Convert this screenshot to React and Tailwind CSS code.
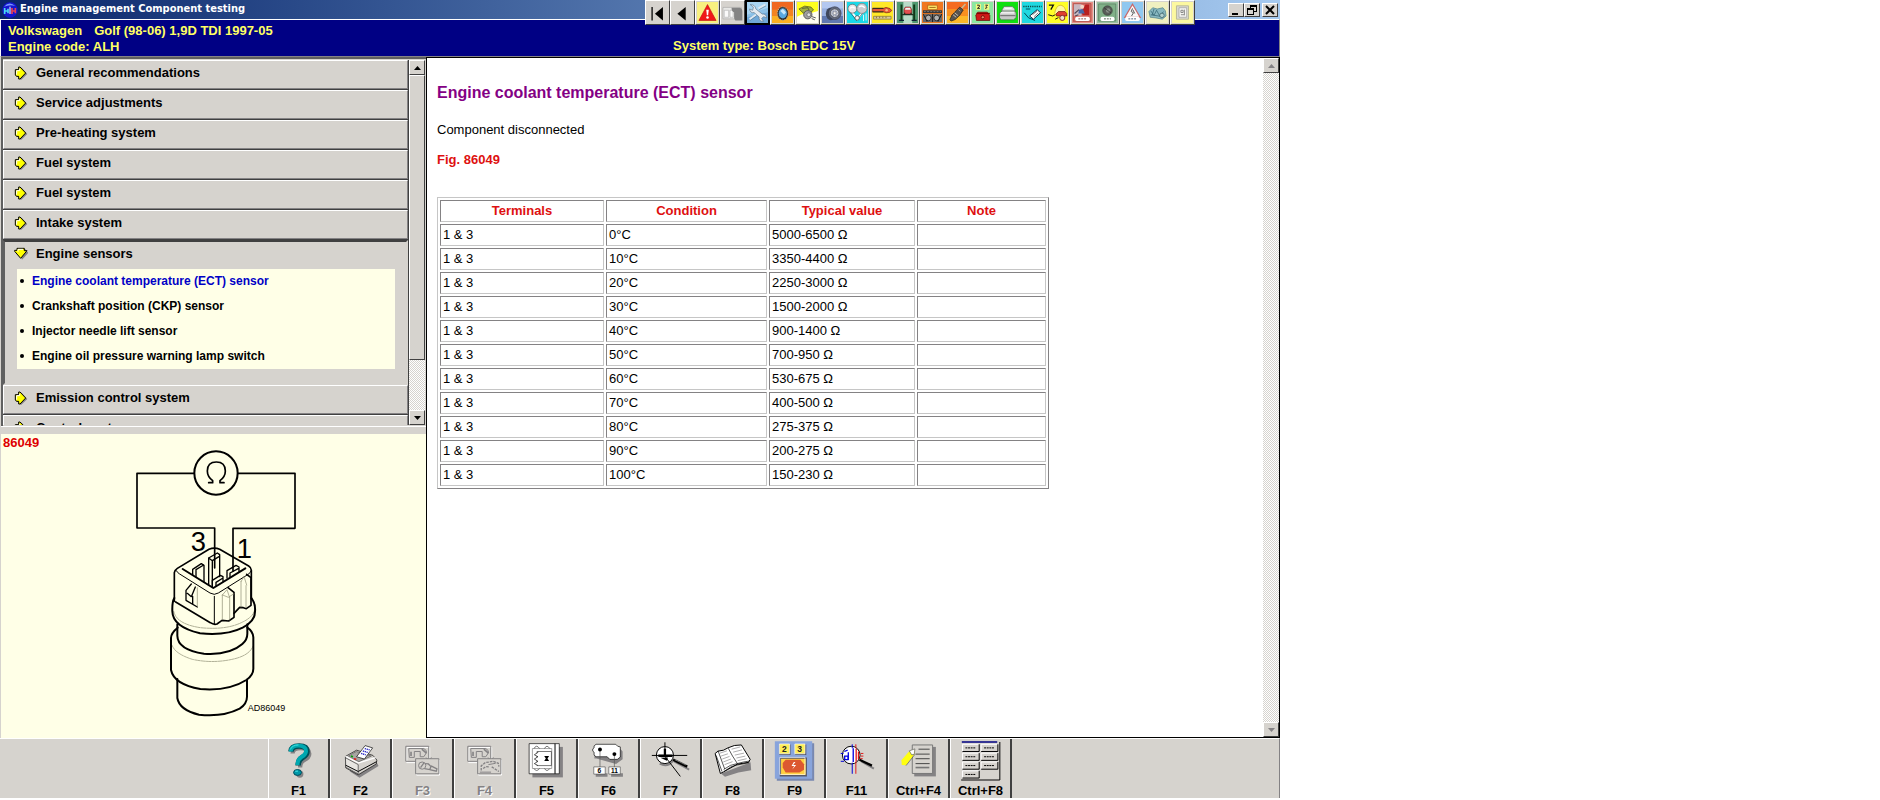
import React, { useState } from "react";

const sections = [
  { id: "general", title: "General recommendations" },
  { id: "service", title: "Service adjustments" },
  { id: "preheat", title: "Pre-heating system" },
  { id: "fuel1", title: "Fuel system" },
  { id: "fuel2", title: "Fuel system" },
  { id: "intake", title: "Intake system" },
  {
    id: "sensors",
    title: "Engine sensors",
    items: [
      "Engine coolant temperature (ECT) sensor",
      "Crankshaft position (CKP) sensor",
      "Injector needle lift sensor",
      "Engine oil pressure warning lamp switch",
    ],
  },
  { id: "emission", title: "Emission control system" },
  { id: "control", title: "Control system" },
];

const readings = [
  ["1 & 3", "0°C", "5000-6500 Ω"],
  ["1 & 3", "10°C", "3350-4400 Ω"],
  ["1 & 3", "20°C", "2250-3000 Ω"],
  ["1 & 3", "30°C", "1500-2000 Ω"],
  ["1 & 3", "40°C", "900-1400 Ω"],
  ["1 & 3", "50°C", "700-950 Ω"],
  ["1 & 3", "60°C", "530-675 Ω"],
  ["1 & 3", "70°C", "400-500 Ω"],
  ["1 & 3", "80°C", "275-375 Ω"],
  ["1 & 3", "90°C", "200-275 Ω"],
  ["1 & 3", "100°C", "150-230 Ω"],
];

// small module icons, each drawn on a 66 x 66 grid
const moduleIcons = [
  {
    name: "First",
    bg: "#d6d3ce",
    art: (
      <>
        <path d="M16 16v42" stroke="#000" strokeWidth="4" />
        <path d="M50 16v42L25 37z" />
      </>
    ),
  },
  {
    name: "Previous",
    bg: "#d6d3ce",
    art: <path d="M43 16v42L17 37z" />,
  },
  {
    name: "Warning",
    bg: "#f8f080",
    art: (
      <>
        <path d="M33 8L60 58H6z" fill="#f01818" stroke="#c01010" strokeWidth="2" />
        <path d="M29 24h8l-2 18h-4z" fill="#fff" />
        <circle cx="33" cy="49" r="4" fill="#fff" />
      </>
    ),
  },
  {
    name: "Vehicle",
    bg: "#d6d3ce",
    art: (
      <>
        <path d="M3 17h58v36H3z" fill="#e8e8e6" stroke="#a8a8a6" strokeWidth="2" />
        <path d="M7 26h14v22H7zM25 26h10v22H25z" fill="#fafafa" stroke="#b0b0b0" strokeWidth="2" />
        <path d="M30 18h26q8 2 8 12v28H42q-4-2-4-10V32q-8-2-8-14z" fill="#848484" />
      </>
    ),
  },
  {
    name: "Service tools",
    bg: "#8cc0e6",
    active: true,
    art: (
      <>
        <path d="M0 0h66v18L0 40z" fill="#a8d4f2" />
        <path d="M0 48l66-16v34H0z" fill="#70a8d8" />
        <path d="M10 8l10 8-2 10-10-4q2 14 14 11l16 14q-2 14 14 14l-6-9 6-6 10 4q-2-14-14-12L28 22Q26 8 10 8z" fill="#e4eaf0" stroke="#5c7488" strokeWidth="2" />
        <path d="M36 20l22-12M8 54l20-14" stroke="#dfe8f0" strokeWidth="6" />
        <path d="M38 24l22-12M10 58l20-14" stroke="#587890" strokeWidth="2" />
      </>
    ),
  },
  {
    name: "Timing belts",
    bg: "#f06820",
    art: (
      <>
        <path d="M0 24h66v42H0z" fill="#f48420" />
        <path d="M0 44h66v22H0z" fill="#fcb020" />
        <ellipse cx="34" cy="36" rx="17" ry="21" fill="#282828" />
        <ellipse cx="34" cy="36" rx="17" ry="21" fill="none" stroke="#b8a890" strokeWidth="4" strokeDasharray="3 4" />
        <ellipse cx="34" cy="36" rx="13" ry="16" fill="#58a8e0" />
        <path d="M26 28l8-7 10 11-6 8z" fill="#c8e8fa" />
      </>
    ),
  },
  {
    name: "Repair times",
    bg: "#ffff20",
    art: (
      <>
        <path d="M0 46q20-12 34-8l32-10v38H0z" fill="#fffff0" />
        <path d="M6 22l18-9 20 3 8 9-10 8-22 2z" fill="#a0b040" stroke="#404018" strokeWidth="2" />
        <path d="M16 20l18-2 4 8" stroke="#333" strokeWidth="2" fill="none" />
        <circle cx="34" cy="40" r="13" fill="#a0a0a0" stroke="#585858" strokeWidth="3" />
        <circle cx="37" cy="40" r="6" fill="#e0e0e0" stroke="#555" strokeWidth="2" />
        <path d="M47 46l12 4M46 52l10 4" stroke="#555" strokeWidth="3" />
      </>
    ),
  },
  {
    name: "Wheel alignment",
    bg: "#b4c8f0",
    art: (
      <>
        <path d="M0 20h66v24H0z" fill="#98b0e0" />
        <path d="M0 44h66v22H0z" fill="#6078b0" />
        <ellipse cx="28" cy="37" rx="16" ry="20" fill="#40485c" />
        <circle cx="40" cy="35" r="20" fill="#646c80" stroke="#34384a" strokeWidth="2" />
        <circle cx="40" cy="35" r="13" fill="#d0d4e0" stroke="#444" strokeWidth="2" />
        <circle cx="40" cy="35" r="9" fill="#9098ac" />
        <path d="M40 24v22M30 30l20 10M50 30L30 40" stroke="#dde0e8" strokeWidth="2" />
        <circle cx="40" cy="35" r="4" fill="#fff" stroke="#444" />
      </>
    ),
  },
  {
    name: "Drive belts",
    bg: "#18d8e8",
    art: (
      <>
        <path d="M10 26l22 28 18-22" fill="none" stroke="#fff" strokeWidth="6" />
        <path d="M8 30l22 28 22-26" fill="none" stroke="#245" strokeWidth="2" />
        <circle cx="17" cy="21" r="14" fill="#e8e8e8" stroke="#555" strokeWidth="2" />
        <circle cx="47" cy="20" r="16" fill="#c8ccd0" stroke="#777" strokeWidth="2" />
        <path d="M10 20q7-8 14 0M38 16q9-8 18 2" fill="none" stroke="#fff" strokeWidth="4" />
        <circle cx="32" cy="50" r="7" fill="#f4f4f4" stroke="#333" strokeWidth="2" />
        <path d="M52 40v20M60 36v22" stroke="#e8f8f8" strokeWidth="3" />
      </>
    ),
  },
  {
    name: "Key programming",
    bg: "#ffe828",
    art: (
      <>
        <path d="M2 20h34l8-3q16 2 18 10-4 8-18 7l-8-3H2z" fill="#e85838" stroke="#702010" strokeWidth="2" />
        <path d="M2 20h34M2 31h34" stroke="#222" strokeWidth="3" />
        <circle cx="46" cy="26" r="4" fill="#f8c080" />
        <path d="M5 45h55v9H5z" fill="#d8c898" stroke="#786838" strokeWidth="2" />
        <path d="M14 46v5M24 46v5M34 46v5M44 46v5" stroke="#604c10" strokeWidth="2" />
      </>
    ),
  },
  {
    name: "Lift points",
    bg: "#509870",
    art: (
      <>
        <path d="M20 0h28v66H20z" fill="#b8dcc8" />
        <path d="M14 8v50M54 8v50" stroke="#103818" strokeWidth="6" />
        <path d="M6 58h16M46 58h16" stroke="#123" strokeWidth="4" />
        <path d="M22 24l4-8h16l4 8v14H22z" fill="#e05050" stroke="#701818" strokeWidth="2" />
        <path d="M27 18h14l2 6H25z" fill="#f4f4f4" />
        <path d="M16 40h36M24 34v6M44 34v6" stroke="#203020" strokeWidth="4" />
      </>
    ),
  },
  {
    name: "Engine management",
    bg: "#f07820",
    art: (
      <>
        <path d="M18 10h30v14H18z" fill="#ffe868" stroke="#a05010" strokeWidth="2" />
        <path d="M23 17h20" stroke="#a06818" strokeWidth="3" />
        <path d="M3 26h60v9H3z" fill="#383838" />
        <path d="M6 30h54" stroke="#909090" strokeWidth="2" strokeDasharray="6 4" />
        <path d="M3 38h60v25H3z" fill="#686868" />
        <circle cx="20" cy="50" r="9" fill="#b0b0b0" stroke="#282828" strokeWidth="3" />
        <circle cx="46" cy="50" r="9" fill="#b0b0b0" stroke="#282828" strokeWidth="3" />
        <path d="M4 38l12 24M62 38L50 62M33 38v25" stroke="#202020" strokeWidth="3" />
      </>
    ),
  },
  {
    name: "Spark plugs",
    bg: "#f46c20",
    art: (
      <>
        <path d="M0 22h66v44H0z" fill="#f89020" />
        <path d="M0 44h66v22H0z" fill="#fcb828" />
        <path d="M58 6L42 24" stroke="#c8b890" strokeWidth="5" />
        <path d="M40 16l11 9-11 17-14 13-13 5-4-4 6-14 13-14z" fill="#585450" stroke="#201810" strokeWidth="2" />
        <path d="M24 34l11 9M19 40l10 8" stroke="#c8c0b0" strokeWidth="3" />
        <path d="M36 24l6 5" stroke="#a8a098" strokeWidth="3" />
      </>
    ),
  },
  {
    name: "Trouble codes",
    bg: "#8ce8a0",
    art: (
      <>
        <path d="M12 6h16v18H12zM38 6h16v18H38z" fill="#f4f880" />
        <path d="M16 10h7v5l-6 5h8M42 10h7l-4 4q6 5-4 6" stroke="#222" strokeWidth="3" fill="none" />
        <path d="M12 42l6-10h30l8 10v16H14z" fill="#d01818" stroke="#500" strokeWidth="2" />
        <path d="M14 36h42" stroke="#800" strokeWidth="4" />
        <circle cx="34" cy="48" r="5" fill="#f08060" stroke="#400" strokeWidth="2" />
      </>
    ),
  },
  {
    name: "Car systems",
    bg: "#10e010",
    art: (
      <>
        <path d="M14 28l8-14h26l8 8v8l-8 6z" fill="#e0e0e0" stroke="#507050" strokeWidth="2" />
        <path d="M8 36l8-8h38l6 5v16l-8 7H14l-6-6z" fill="#c8c8c8" stroke="#486848" strokeWidth="2" />
        <path d="M12 34h42" stroke="#f8f8f8" strokeWidth="4" />
        <path d="M10 43h48" stroke="#686868" strokeWidth="3" />
        <path d="M24 20h22" stroke="#fff" strokeWidth="3" />
      </>
    ),
  },
  {
    name: "Air bags",
    bg: "#20d8e0",
    art: (
      <>
        <path d="M4 14h58" stroke="#084848" strokeWidth="5" strokeDasharray="4 3" />
        <path d="M24 44l24-20 10 10-22 20z" fill="#fff" stroke="#123" strokeWidth="3" />
        <path d="M33 40l14-11M38 46l13-12" stroke="#444" strokeWidth="2" />
        <path d="M7 34l14 16 20 8M12 22h14" stroke="#045" strokeWidth="3" fill="none" />
      </>
    ),
  },
  {
    name: "Diagnostics",
    bg: "#ffff28",
    art: (
      <>
        <path d="M6 10h14l-8 14" stroke="#111" strokeWidth="4" fill="none" />
        <path d="M24 36q4-26 20-26 14 4 16 24" fill="#fff8a0" stroke="#c8a820" strokeWidth="2" />
        <path d="M28 38l8-8h20l6 6v8H30z" fill="#e04030" stroke="#600" strokeWidth="2" />
        <circle cx="48" cy="50" r="8" fill="#f0e0d0" stroke="#822" strokeWidth="3" />
        <path d="M4 40l14 4 8-4M26 54l10-5" stroke="#111" strokeWidth="3" fill="none" />
      </>
    ),
  },
  {
    name: "Safety restraints",
    bg: "#e89088",
    art: (
      <>
        <path d="M4 5h56v56H4z" fill="#d86860" stroke="#a04840" strokeWidth="2" />
        <path d="M6 7h24v36H6z" fill="#c8b8c0" />
        <path d="M42 8h12v34H34l-4-8z" fill="#b82020" />
        <circle cx="32" cy="15" r="6" fill="#f4d8c8" />
        <path d="M22 24l12-2 6 14H20z" fill="#4868a8" />
        <path d="M8 36l14-12M20 40l-10 4" stroke="#504858" strokeWidth="4" />
        <rect x="10" y="46" width="46" height="14" rx="6" fill="#fff" />
        <path d="M20 53h26" stroke="#885050" strokeWidth="3" strokeDasharray="6 3" />
      </>
    ),
  },
  {
    name: "Air conditioning",
    bg: "#98c0a0",
    art: (
      <>
        <path d="M5 6h54v54H5z" fill="#80b088" stroke="#507858" strokeWidth="2" />
        <circle cx="33" cy="27" r="15" fill="#585c58" stroke="#384038" strokeWidth="2" />
        <circle cx="35" cy="27" r="7" fill="#889088" />
        <path d="M22 18l22 16" stroke="#282c28" strokeWidth="2" />
        <rect x="11" y="46" width="44" height="14" rx="6" fill="#fff" />
        <path d="M22 53h22" stroke="#506050" strokeWidth="3" strokeDasharray="6 3" />
      </>
    ),
  },
  {
    name: "Stability control",
    bg: "#90c8f0",
    art: (
      <>
        <path d="M33 7L57 48H9z" fill="#f8f8f8" stroke="#c86868" strokeWidth="4" />
        <path d="M33 20l-4 10 7 4-6 10M34 24l6 12" stroke="#555" strokeWidth="3" fill="none" />
        <rect x="10" y="46" width="46" height="14" rx="6" fill="#fff" />
        <path d="M20 53h26" stroke="#486078" strokeWidth="3" strokeDasharray="6 3" />
      </>
    ),
  },
  {
    name: "Wiring diagrams",
    bg: "#f0f0c0",
    art: (
      <>
        <path d="M6 30l12-12 14 4 18-4 8 10 2 16-12 10-20-4-18-2z" fill="#88b8c0" stroke="#487880" strokeWidth="2" />
        <path d="M12 28l10 14 8-16 10 18 12-14M12 40l36 6M22 22l-6 20" stroke="#285868" strokeWidth="2" fill="none" />
        <circle cx="47" cy="42" r="7" fill="#b0d0d0" stroke="#305058" strokeWidth="2" />
      </>
    ),
  },
  {
    name: "Component data",
    bg: "#fcf8a0",
    art: (
      <>
        <path d="M14 12h38v42H14z" fill="#d8d8d0" stroke="#b8b898" strokeWidth="3" />
        <path d="M22 18h24v30H22z" fill="#f4f4f0" stroke="#999" strokeWidth="2" />
        <path d="M28 26h7v7h-7zM39 24v18M28 40h10" fill="none" stroke="#555" strokeWidth="2" />
      </>
    ),
  },
];

function QuestionIcon() {
  return (
    <svg viewBox="57 45 180 132" className="h-11 w-full" fill="none">
      <path d="M129 88q0-16 24-16 27 0 27 17 0 12-17 20-11 6-11 22" stroke="#848284" strokeWidth="13" />
      <circle cx="151" cy="151" r="11" fill="#848284" />
      <path d="M124 82q1-17 25-17 24 0 24 17 0 11-15 19-12 7-12 24" stroke="#005058" strokeWidth="17" />
      <path d="M123 82q1-18 24-18 23 0 23 17 0 10-14 18-12 7-12 24" stroke="#00a8b0" strokeWidth="12" />
      <path d="M122 76q6-14 25-14" stroke="#40e0e0" strokeWidth="3" />
      <ellipse cx="144" cy="146" rx="12" ry="9" fill="#0098a8" stroke="#004858" strokeWidth="3" />
      <path d="M137 142h8" stroke="#50f0f0" strokeWidth="3" />
    </svg>
  );
}

function PrinterIcon() {
  return (
    <svg viewBox="243 45 180 132" className="h-11 w-full" strokeLinejoin="round">
      <path d="M300 142l30 20 58-36-8-16z" fill="#848284" />
      <path d="M287 97l34-19 50 16 12 14-2 12-55 33-38-21z" fill="#d6d3ce" stroke="#000" strokeWidth="2" />
      <path d="M287 97l40 20 52-16" fill="none" stroke="#fff" strokeWidth="4" />
      <path d="M287 101l39 21v28l-38-20z" fill="#e8e6e2" stroke="#333" strokeWidth="2" />
      <path d="M288 124l38 19 56-30" fill="none" stroke="#000" strokeWidth="3" />
      <path d="M296 96l24-14 46 14-38 17z" fill="#a8a6a2" stroke="#555" strokeWidth="2" />
      <path d="M321 98l26-34 23 7-25 34z" fill="#fff" stroke="#000" strokeWidth="2" />
      <path d="M346 73l15 4M340 80l15 5M335 88l14 4" stroke="#2020c0" strokeWidth="4" strokeDasharray="4 2" />
      <path d="M304 96l6 2" stroke="#00a000" strokeWidth="5" />
      <path d="M313 104l7 2" stroke="#e02020" strokeWidth="5" />
    </svg>
  );
}

function LinkedFigures({ variant }) {
  return (
    <svg viewBox="0 0 180 132" className="h-11 w-full" fill="none">
      <g stroke="#fff" strokeWidth="3">
        <path d="M42 25h70v46H42zM72 63h70v46H72z" />
      </g>
      <g stroke="#848284" strokeWidth="3">
        <path d="M39 21h70v46H39z" />
        <path d="M48 28h46q10 5 8 13l-8 12H83V37H65v18H50z" />
        <path d="M55 38v13M88 30l14 12" strokeWidth="5" />
        <path d="M100 56l12 8 5-9" />
        <path d="M69 59h71v46H69z" fill="#d6d3ce" />
        {variant === "sensor" ? (
          <>
            <circle cx="89" cy="80" r="11" />
            <path d="M84 86l11-15M98 74l10 1 8 8-4 9-16-3M116 81l18 9-2 7-20-5" strokeWidth="4" />
          </>
        ) : (
          <>
            <path d="M80 95V81l12-10 24-4 16 6 2 10M86 89l8-6 10 1M112 84l22 14" strokeDasharray="8 3" strokeWidth="4" />
            <path d="M102 77l22-4M76 100h34" />
          </>
        )}
      </g>
    </svg>
  );
}

function CircuitIcon() {
  return (
    <svg viewBox="801 45 180 132" className="h-11 w-full" fill="none">
      <path d="M848 68h93v93h-93z" fill="#848284" />
      <path d="M838 58h92v92h-92z" fill="#fff" stroke="#000" strokeWidth="2" />
      <path d="M917 58v92" stroke="#000" strokeWidth="3" />
      <path d="M848 73h59v61h-59z" stroke="#777" strokeWidth="2" />
      <path d="M862 82h44v43h-44z" stroke="#333" strokeWidth="2" />
      <path d="M866 84l-12 8 11 6-11 7 11 7-11 7 11 6" fill="#fff" stroke="#000" strokeWidth="2" />
      <path d="M853 73q7-14 17 0M885 73q7-14 16 0M853 134q7 12 17 0M885 134q7 12 16 0" stroke="#333" strokeWidth="2" />
      <path d="M884 96h15l-5 7 5 8h-15l5-8z" fill="#000" />
    </svg>
  );
}

function TerminalsIcon() {
  return (
    <svg viewBox="987 45 180 132" className="h-11 w-full" fill="none">
      <path d="M1040 103h-6V82l6-10h72l8 10v24l-20 14M1038 148h36v11h-36zM1085 148h36v11h-36z" fill="#848284" />
      <path d="M1033 65l6-5h60l6 6 8 2v31l-9 7h-23l-8-8h-34l-6-5v-9l-4-3v-7l4-3z" fill="#fff" stroke="#000" strokeWidth="2" />
      <path d="M1051 76v54M1095 90v40" stroke="#555" strokeWidth="2" />
      <circle cx="1051" cy="76" r="6" fill="#000" />
      <circle cx="1095" cy="90" r="6" fill="#000" />
      <path d="M1032 129h35v22h-35zM1078 129h35v22h-35z" fill="#fff" stroke="#555" strokeWidth="2" />
      <text x="1049" y="147" textAnchor="middle" fontSize="20" fontWeight="bold" fill="#000">6</text>
      <text x="1095" y="147" textAnchor="middle" fontSize="20" fontWeight="bold" fill="#000">11</text>
    </svg>
  );
}

function LocateIcon() {
  return (
    <svg viewBox="3 45 180 132" className="h-11 w-full" fill="none">
      <path d="M104 112l46 25M60 119q26 14 43-12" stroke="#848284" strokeWidth="6" />
      <circle cx="76" cy="93" r="26" fill="#fff" stroke="#000" strokeWidth="3" />
      <path d="M76 54v44M36 94h108M77 98l46 60" stroke="#000" strokeWidth="3" />
      <path d="M76 74v20M56 95h43" stroke="#000" strokeWidth="7" />
      <path d="M62 101l20 9 3-10" fill="#000" />
      <path d="M101 107l43 21" stroke="#000" strokeWidth="8" />
      <path d="M106 107l34 16" stroke="#aaa" strokeWidth="2" />
    </svg>
  );
}

function BookIcon() {
  return (
    <svg viewBox="189 45 180 132" className="h-11 w-full" fill="none" strokeLinejoin="round">
      <path d="M244 149l12 10 41-13 39-7-2-24z" fill="#848284" />
      <path d="M226 88l9-7q18-1 30-10 19-10 41-9l27 44-5 9-35 6-41 23-10 5z" fill="#fff" stroke="#000" strokeWidth="3" />
      <path d="M235 80l20 55M266 72q12 24 28 47M229 94l18 49M252 137q20-16 41-18 21-6 38-8M253 143q23-19 41-20l36-7" stroke="#000" strokeWidth="2" />
      <path d="M241 87l21-7M244 96l21-7M248 105l22-8M251 114l23-9M255 122l24-9M276 75l27-7M281 84l27-7M286 93l28-6M291 102l27-6M295 110l27-6" stroke="#848284" strokeWidth="2" />
    </svg>
  );
}

function FaultCodeIcon() {
  return (
    <svg viewBox="375 45 180 132" className="h-11 w-full" fill="none">
      <path d="M411 57h114v114H411z" fill="#7888b0" />
      <path d="M405 51h114v114H405z" fill="#88a4dc" />
      <path d="M419 61h34v32h-34zM467 61h34v32h-34z" fill="#585868" />
      <path d="M419 59h31v30h-31zM466 59h31v30h-31z" fill="#ffee58" stroke="#fff" strokeWidth="2" />
      <text x="434" y="83" textAnchor="middle" fontSize="26" fontWeight="bold" fill="#222">2</text>
      <text x="481" y="83" textAnchor="middle" fontSize="26" fontWeight="bold" fill="#222">3</text>
      <path d="M422 102h79v54h-79z" fill="#ffd040" stroke="#585868" strokeWidth="4" />
      <path d="M420 100h77v52h-77z" stroke="#fff" strokeWidth="2" />
      <path d="M438 107h45l11 14v17l-14 8h-42l-9-15v-14z" fill="#dc5830" />
      <path d="M463 114l-7 12h8l-6 11 12-14h-9l7-9z" fill="#fff" />
    </svg>
  );
}

function SearchDiagramIcon() {
  return (
    <svg viewBox="561 45 180 132" className="h-11 w-full" fill="none">
      <path d="M666 112l38 22" stroke="#848284" strokeWidth="6" />
      <circle cx="635" cy="93" r="27" fill="#fff" stroke="#000" strokeWidth="3" />
      <path d="M638 60v12M638 116v34" stroke="#0000d8" strokeWidth="3" />
      <path d="M649 60v12M649 112v38M664 88h8M664 96h8M662 104h8" stroke="#e01818" strokeWidth="3" />
      <path d="M603 88h8M603 112h10" stroke="#0000d8" strokeWidth="3" />
      <path d="M641 72v42M626 84v24M615 96h10v11h-10zM614 82l10-4" stroke="#0000e0" strokeWidth="4" />
      <path d="M650 74v38M657 82v24" stroke="#e01818" strokeWidth="4" />
      <path d="M660 107l38 18" stroke="#000" strokeWidth="7" />
    </svg>
  );
}

function NotesIcon() {
  return (
    <svg viewBox="747 45 180 132" className="h-11 w-full" fill="none">
      <path d="M824 68h66v90h-66z" fill="#848284" />
      <path d="M818 62h62v87h-62z" fill="#d6d3ce" stroke="#777" strokeWidth="3" />
      <path d="M837 75h34M828 90h43M828 104h43M828 119h43" stroke="#444" strokeWidth="3" />
      <path d="M828 131h42" stroke="#777" strokeWidth="5" />
      <path d="M785 109l25-29 16-5-1 15-26 34-13-1z" fill="#ffff10" />
      <path d="M809 80l17-6-2 17-8 1z" fill="#fff" stroke="#555" strokeWidth="2" />
      <path d="M799 125l27-34" stroke="#555" strokeWidth="2" />
    </svg>
  );
}

function KeypadIcon() {
  const keys = [
    [968, 60], [1025, 60],
    [968, 87], [1025, 87],
    [968, 114], [1025, 114],
    [968, 141],
  ];
  return (
    <svg viewBox="933 45 180 132" className="h-11 w-full" fill="none">
      <path d="M966 53h108" stroke="#000080" strokeWidth="4" />
      <path d="M964 169h118V53" stroke="#000" strokeWidth="3" />
      {keys.map(([x, y]) => (
        <g key={`${x}-${y}`}>
          <rect x={x} y={y} width="50" height="22" fill="#d6d3ce" />
          <path d={`M${x} ${y + 22}v-22h50`} stroke="#fff" strokeWidth="3" />
          <path d={`M${x} ${y + 22}h51v-22`} stroke="#000" strokeWidth="3" />
          <path d={`M${x + 9} ${y + 11}h32`} stroke="#000" strokeWidth="3" strokeDasharray="6 2" />
        </g>
      ))}
    </svg>
  );
}

const functionKeys = [
  { label: "F1", icon: <QuestionIcon /> },
  { label: "F2", icon: <PrinterIcon /> },
  { label: "F3", icon: <LinkedFigures variant="sensor" />, disabled: true },
  { label: "F4", icon: <LinkedFigures variant="engine" />, disabled: true },
  { label: "F5", icon: <CircuitIcon /> },
  { label: "F6", icon: <TerminalsIcon /> },
  { label: "F7", icon: <LocateIcon /> },
  { label: "F8", icon: <BookIcon /> },
  { label: "F9", icon: <FaultCodeIcon /> },
  { label: "F11", icon: <SearchDiagramIcon /> },
  { label: "Ctrl+F4", icon: <NotesIcon /> },
  { label: "Ctrl+F8", icon: <KeypadIcon /> },
];

function AppLogo() {
  return (
    <svg viewBox="0 0 48 48" className="size-4">
      <circle cx="24" cy="24" r="23" fill="#1414d0" />
      <path d="M6 14q16-18 34-2-16-6-34 2z" fill="#7898ff" />
      <path d="M8 18v18M8 27h10M18 20v14" stroke="#48d8f0" strokeWidth="5" />
      <path d="M30 18v18M30 27h10M40 18v16" stroke="#e84050" strokeWidth="5" />
      <path d="M24 14v22" stroke="#fff" strokeWidth="3" />
    </svg>
  );
}

function ArrowIcon({ open }) {
  if (open) {
    return (
      <svg viewBox="0 0 42 39" className="h-[13px] w-3.5">
        <path d="M12 6h23v8h7v5L24 38z" fill="#848284" />
        <path d="M9 4h22v7h8L20 34 2 13v-3h7z" fill="#ffff00" stroke="#000" strokeWidth="3" />
        <path d="M12 14V7h15" fill="none" stroke="#fff" strokeWidth="3" />
      </svg>
    );
  }
  return (
    <svg viewBox="0 0 42 42" className="size-3.5">
      <path d="M6 12h12V5h5l17 19-18 17h-4v-8H6z" fill="#848284" />
      <path d="M4 11h10V3h4l17 18-17 18h-4v-8H8l-4-4z" fill="#ffff00" stroke="#000" strokeWidth="3" />
      <path d="M8 26V14h9V8" fill="none" stroke="#fff" strokeWidth="3" />
    </svg>
  );
}

function ScrollButton({ dir, disabled }) {
  return (
    <button
      type="button"
      disabled={disabled}
      aria-label={dir === "up" ? "Scroll up" : "Scroll down"}
      className="flex h-[15px] w-4 shrink-0 items-center justify-center border border-t-white border-l-white border-r-[#404040] border-b-[#404040] bg-[#d6d3ce]"
    >
      <svg viewBox="0 0 9 6" className="h-1.5 w-[9px]">
        <path
          d={dir === "up" ? "M1 5h7L4.500 1z" : "M1 1h7L4.500 5z"}
          fill={disabled ? "#848284" : "#000"}
        />
      </svg>
    </button>
  );
}

function MenuSection({ section, open, selected, onToggle, onSelect }) {
  if (open && section.items) {
    return (
      <li className="border-2 border-t-[#404040] border-l-[#606060] border-r-[#d6d3ce] border-b-[#d6d3ce] pb-3.5">
        <button
          type="button"
          className="flex h-[27px] w-full items-center gap-2 pb-1 pl-[9px] text-left text-[13px] font-bold"
          onClick={() => onToggle(section.id)}
        >
          <ArrowIcon open />
          {section.title}
        </button>
        <ul className="mr-[11px] ml-3 bg-[#ffffe7]">
          {section.items.map((item) => (
            <li key={item} className="flex h-[25px] items-center gap-2 pb-0.5 pl-[3px]">
              <span className="size-1 rounded-full bg-black" />
              <a
                href="#figure"
                className={selected === item ? "text-xs font-bold text-[#0000c6]" : "text-xs font-bold text-black"}
                onClick={() => onSelect(item)}
              >
                {item}
              </a>
            </li>
          ))}
        </ul>
      </li>
    );
  }

  return (
    <li className="border-b border-[#404040]">
      <button
        type="button"
        className="flex h-[29px] w-full items-center gap-2 border border-t-white border-l-white border-r-[#848284] border-b-[#848284] pb-1 pl-2.5 text-left text-[13px] font-bold"
        onClick={() => onToggle(section.id)}
      >
        <ArrowIcon />
        {section.title}
      </button>
    </li>
  );
}

// drawing units are a third of a pixel
function SensorFigure() {
  return (
    <svg
      id="figure"
      viewBox="3 27 1275 912"
      className="block h-[304px] w-full"
      fill="none"
      stroke="#000"
      strokeLinejoin="round"
      strokeLinecap="round"
    >
      <g strokeWidth="5">
        <path d="M583 145H411v164h233v120M714 145h171v165H699v129" />
        <circle cx="648" cy="144" r="65" fill="#ffffe7" strokeWidth="6" />
        <path d="M626 173h12v-6q-16-12-16-29 0-27 27-27t27 27q0 17-16 29v6h12" strokeWidth="5" />
      </g>

      {/* connector shell */}
      <g strokeWidth="5">
        <path d="M523 529V443q1-8 9-13l95-57q16-7 32 0l87 50q8 5 8 13v86" />
        <path d="M529 437q3 6 10 10l91 57q13 8 25 0l88-55q9-5 11-13" strokeWidth="3" />
        <path d="M548 432l92 57 96-59" strokeWidth="6" />
        <path d="M527 531l104 62q10 7 20 4l15-11 20 2 16-11V502l-18-14" />
        <path d="M702 565l17-18 11 1 9 3 14-10V458l-13-10" />
        <path d="M643 514v82" strokeWidth="3" />
      </g>

      {/* terminal blades */}
      <g strokeWidth="4">
        <path d="M578 451v-18l26-17 8 5v50M588 456v-22l23-14" />
        <path d="M626 480V399l26-15 7 5v66M637 483v-76l20-12M626 399l11 8" />
        <path d="M637 486v-20l24-15 8 4v14M648 484v-12l21-13" />
        <path d="M681 459v-22l27-16 9 5v13M690 457v-13l26-14" />
        <path d="M574 477l-16 19v30l34 20M562 505l12 10 12-29M578 514v24" />
      </g>
      <g stroke="#8a8a70" strokeWidth="2">
        <path d="M592 488v56M667 510v73M689 519v66M667 510l14-16 8 24M723 470v76M738 482v65M723 470l9-16 8 26" />
        <path d="M668 510l17 7 17-11" />
        <path d="M521 559q8 38 80 49 79 8 127-17 31-15 35-34" strokeDasharray="14 3" />
        <path d="M516 661q10 26 61 42 64 14 128-2 43-11 54-37" strokeDasharray="14 3" />
      </g>

      {/* body */}
      <g strokeWidth="6">
        <path d="M523 519q-7 12-6 40 1 47 83 66 79 8 128-17 37-20 37-48 2-24-10-40" />
        <path d="M532 598v34q1 42 80 54 77 5 115-29 15-13 15-31v-28" />
        <path d="M533 608q-20 16-20 31v96q9 43 88 57 85 7 138-27 21-15 21-34v-94q-1-18-18-29" />
        <path d="M532 762v57q6 36 65 50 71 8 122-18 22-15 22-36v-51" />
      </g>

      <g fill="#000" stroke="none">
        <text x="572" y="378" fontSize="82">3</text>
        <text x="710" y="400" fontSize="82">1</text>
        <text x="743" y="857" fontSize="27">AD86049</text>
      </g>
    </svg>
  );
}

function WindowButtons() {
  const cls =
    "flex h-3.5 w-4 items-center justify-center border border-t-white border-l-white border-r-[#404040] border-b-[#404040] bg-[#d6d3ce]";
  return (
    <div className="flex pr-0.5">
      <button type="button" aria-label="Minimize" className={cls}>
        <svg viewBox="0 0 10 10" className="size-2.5"><path d="M1 8h6v2H1z" /></svg>
      </button>
      <button type="button" aria-label="Restore" className={cls}>
        <svg viewBox="0 0 10 10" className="size-2.5">
          <path d="M3 0h7v7H7V6h2V2H4v1H3zM0 3h7v7H0zM1 5v4h5V5z" fillRule="evenodd" />
        </svg>
      </button>
      <button type="button" aria-label="Close" className={`${cls} ml-0.5`}>
        <svg viewBox="0 0 10 10" className="size-2.5" stroke="#000" strokeWidth="2">
          <path d="M1 1l8 8M9 1L1 9" />
        </svg>
      </button>
    </div>
  );
}

function App() {
  const [openSection, setOpenSection] = useState("sensors");
  const [selected, setSelected] = useState("Engine coolant temperature (ECT) sensor");

  const toggle = (id) => setOpenSection(openSection === id ? null : id);

  return (
    <div className="h-screen bg-white pb-0.5 font-['Liberation_Sans',Arial,sans-serif] text-[13px] text-black">
      <div className="relative flex h-full w-full max-w-7xl flex-col bg-[#d6d3ce]">
        <header>
          <div className="flex h-[19px] items-center gap-0.5 bg-linear-to-r from-[#0a246a] to-[#a6caf0] pl-0.5">
            <AppLogo />
            <h1 className="flex-1 font-['DejaVu_Sans_Condensed','DejaVu_Sans',sans-serif] text-[11px] font-bold text-white">
              Engine management Component testing
            </h1>
            <WindowButtons />
          </div>
          <div className="grid h-[38px] grid-cols-[665px_1fr] border border-t-white border-r-[#848284] border-b-[#848284] border-l-white bg-[#000084] pl-[7px] leading-4 font-bold text-[#ffff63]">
            <div className="pt-[3px]">
              <p className="flex gap-3">
                <span>Volkswagen</span>
                <span>Golf (98-06) 1,9D TDI 1997-05</span>
              </p>
              <p>Engine code: ALH</p>
            </div>
            <p className="self-end pb-0.5">System type: Bosch EDC 15V</p>
          </div>
        </header>

        {/* module strip floats over the title bar */}
        <nav className="absolute top-0 right-[85px] flex" aria-label="Modules">
          {moduleIcons.map(({ name, bg, art, active }) => (
            <button
              key={name}
              type="button"
              title={name}
              className={
                active
                  ? "size-[25px] border-2 border-black bg-[#d6d3ce]"
                  : "size-[25px] border border-t-white border-l-white border-r-[#404040] border-b-[#404040] bg-[#d6d3ce] p-px"
              }
            >
              <svg viewBox="0 0 66 66" className="size-full">
                <rect width="66" height="66" fill={bg} />
                {art}
              </svg>
            </button>
          ))}
        </nav>

        <div className="grid min-h-0 flex-1 grid-cols-[426px_1fr]">
          <aside className="flex min-h-0 flex-col pl-px">
            <div className="flex min-h-0 flex-1 border-t-2 border-l-2 border-[#606060] pt-px pr-px pb-px">
              <ul className="min-w-0 flex-1 overflow-hidden">
                {sections.map((section) => (
                  <MenuSection
                    key={section.id}
                    section={section}
                    open={openSection === section.id}
                    selected={selected}
                    onToggle={toggle}
                    onSelect={setSelected}
                  />
                ))}
              </ul>
              <div className="flex flex-col border-l border-[#404040] bg-[repeating-conic-gradient(#d6d3ce_0_25%,#fff_0_50%)] bg-size-[2px_2px]">
                <ScrollButton dir="up" />
                <div className="h-[285px] border border-t-white border-l-white border-r-[#404040] border-b-[#404040] bg-[#d6d3ce]" />
                <div className="flex-1" />
                <ScrollButton dir="down" />
              </div>
            </div>
            <div className="h-2 shrink-0 border-t border-white bg-[#d6d3ce]" />
            <div className="relative shrink-0 bg-[#ffffe7]">
              <p className="absolute top-px left-0.5 leading-4 font-bold text-[#de0000]">86049</p>
              <SensorFigure />
            </div>
          </aside>

          <main className="flex min-w-0 border border-black bg-white">
            <article className="flex-1 pt-[25px] pl-[10px]">
              <h2 className="text-base leading-5 font-bold text-[#840084]">
                Engine coolant temperature (ECT) sensor
              </h2>
              <p className="mt-[17px] leading-5">Component disconnected</p>
              <p className="mt-2.5 leading-5 font-bold text-[#de1010]">Fig. 86049</p>
              <table className="mt-[27px] w-[612px] table-fixed border-separate border-spacing-0.5 border border-t-[#c6c6c6] border-l-[#c6c6c6] border-r-[#848284] border-b-[#848284] leading-5">
                <colgroup>
                  <col className="w-[164px]" />
                  <col className="w-[161px]" />
                  <col className="w-[146px]" />
                  <col />
                </colgroup>
                <thead>
                  <tr className="text-[#de1010]">
                    {["Terminals", "Condition", "Typical value", "Note"].map((head) => (
                      <th key={head} className="border border-t-[#848284] border-l-[#848284] border-r-[#c6c6c6] border-b-[#c6c6c6] p-0 font-bold">
                        {head}
                      </th>
                    ))}
                  </tr>
                </thead>
                <tbody>
                  {readings.map((row) => (
                    <tr key={row[1]}>
                      {[...row, ""].map((cell, i) => (
                        <td key={i} className="border border-t-[#848284] border-l-[#848284] border-r-[#c6c6c6] border-b-[#c6c6c6] px-0.5 py-0">
                          {cell}
                        </td>
                      ))}
                    </tr>
                  ))}
                </tbody>
              </table>
            </article>
            <div className="flex flex-col justify-between bg-[repeating-conic-gradient(#d6d3ce_0_25%,#fff_0_50%)] bg-size-[2px_2px]">
              <ScrollButton dir="up" disabled />
              <ScrollButton dir="down" disabled />
            </div>
          </main>
        </div>

        <footer className="flex h-[60px] border-t border-r border-t-white border-r-[#848284] pl-[268px]">
          {functionKeys.map(({ label, icon, disabled }) => (
            <button
              key={label}
              type="button"
              disabled={disabled}
              className="flex w-[62px] flex-col items-center border-r-2 border-l border-r-[#404040] border-l-white"
            >
              {icon}
              <span
                className={
                  disabled
                    ? "leading-[15px] font-bold text-[#848284] [text-shadow:1px_1px_0_#fff]"
                    : "leading-[15px] font-bold"
                }
              >
                {label}
              </span>
            </button>
          ))}
        </footer>
      </div>
    </div>
  );
}

export default App;
